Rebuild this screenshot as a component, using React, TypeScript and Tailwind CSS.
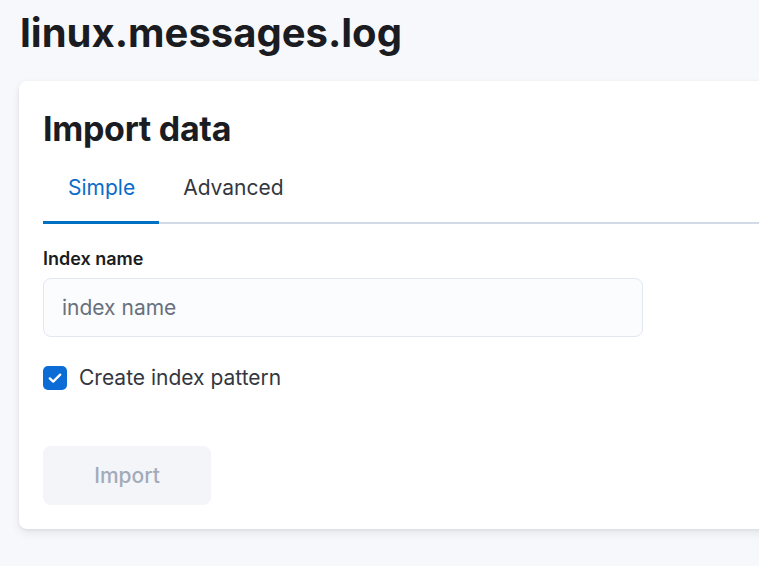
import React from "react";

export default function App() {
  return (
    <div
      className="w-[759px] h-[566px] overflow-hidden bg-[#f7f8fc] text-[#1a1c21]"
      style={{ fontFamily: "Inter, 'Noto Sans', sans-serif" }}
    >
      <h1 className="pt-[9px] pl-[20px] text-[40px] leading-[48px] font-bold">
        linux.messages.log
      </h1>
      <div className="mt-[24px] ml-[19px] w-[790px] rounded-[8px] bg-white p-6 shadow-[0_1px_3px_rgba(0,0,0,0.06),0_4px_10px_rgba(0,0,0,0.08)]">
        <h2 className="mt-[3px] text-[34px] leading-[42px] font-bold tracking-[-0.3px] mb-[4px]">Import data</h2>
        <div className="flex border-b-2 border-[#d3dae6]">
          <button className="relative pl-[25px] pr-[24px] pt-[21px] pb-[22px] text-[21px] leading-[25px] text-[#0b6cc9]">
            Simple
            <span className="absolute left-0 right-0 -bottom-[2px] h-[3px] bg-[#0071c2]" />
          </button>
          <button className="px-[24px] pt-[21px] pb-[22px] text-[21px] leading-[25px] text-[#343741]">
            Advanced
          </button>
        </div>
        <div className="pt-[24px]">
          <label className="block text-[18px] leading-[22px] font-semibold text-[#1a1c21]">Index name</label>
          <div className="mt-[8px] w-[600px] h-[59px] rounded-[8px] border border-[#e3e7f0] bg-[#fbfcfd] flex items-center px-[18px]">
            <span className="text-[21px] text-[#69707d]">index name</span>
          </div>
          <div className="mt-[28px] flex items-center gap-[12px]">
            <span className="w-[24px] h-[24px] rounded-[5px] bg-[#0b6cd6] flex items-center justify-center">
              <svg width="16" height="16" viewBox="0 0 16 16" fill="none">
                <path d="M2.8 8.4l3.4 3.2L13.2 4.6" stroke="white" strokeWidth="2.3" strokeLinecap="round" strokeLinejoin="round" />
              </svg>
            </span>
            <span className="text-[21px] leading-[25px] text-[#343741]">Create index pattern</span>
          </div>
          <button className="mt-[56px] w-[168px] h-[59px] rounded-[8px] bg-[#f3f5f8] text-[21px] font-medium text-[#a2abba]">
            Import
          </button>
        </div>
      </div>
    </div>
  );
}
